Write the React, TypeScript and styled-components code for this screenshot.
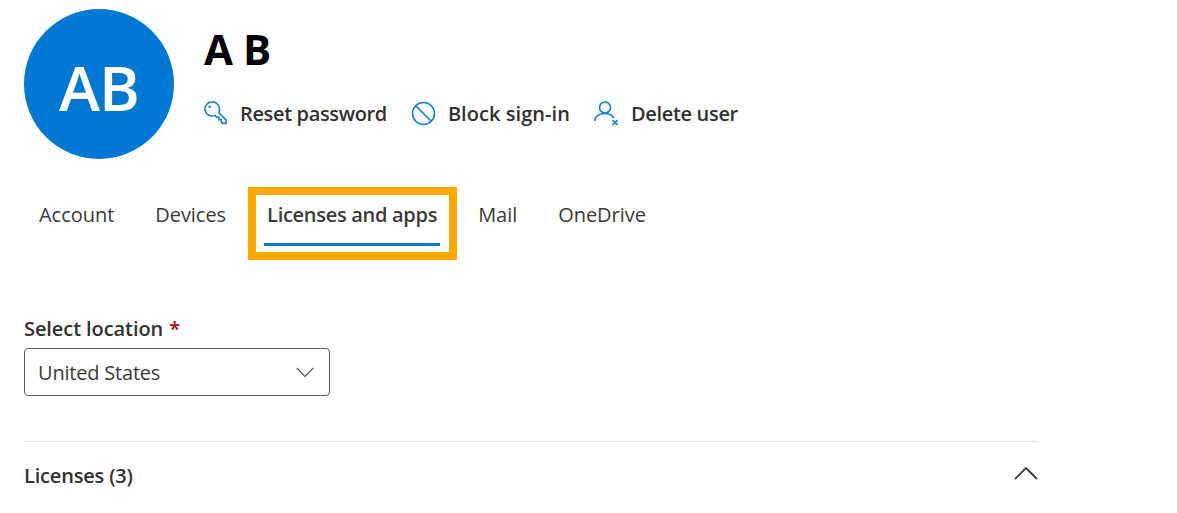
import { createGlobalStyle } from "styled-components";
import styled from "styled-components";

const GlobalStyle = createGlobalStyle`
  html, body {
    margin: 0;
    padding: 0;
    background: #fff;
    overflow: hidden;
  }
  body {
    font-family: "Open Sans", "Noto Sans", "Liberation Sans", sans-serif;
    color: #323130;
  }
`;

const Page = styled.div`
  width: 1014px;
  padding: 9px 0 0 24px;
`;

const Header = styled.div`
  display: flex;
  gap: 30px;
`;

const Avatar = styled.div`
  box-sizing: border-box;
  width: 150px;
  height: 150px;
  padding-top: 5px;
  border-radius: 50%;
  background: #0078d4;
  color: #fff;
  font-size: 62px;
  font-weight: 600;
  letter-spacing: -1px;
  display: flex;
  align-items: center;
  justify-content: center;
`;

const HeaderInfo = styled.div`
  padding-top: 14px;
`;

const Name = styled.div`
  font-size: 42px;
  line-height: 52px;
  font-weight: 700;
  color: #000;
  letter-spacing: -0.5px;
`;

const Actions = styled.div`
  display: flex;
  gap: 24px;
  margin-top: 12px;
`;

const Action = styled.div<{ $tracking: number }>`
  display: flex;
  align-items: center;
  gap: 12px;
  height: 52px;
  font-size: 20px;
  font-weight: 600;
  letter-spacing: ${(p) => p.$tracking}px;
  white-space: nowrap;
`;

const Tabs = styled.div`
  display: flex;
  gap: 35px;
  margin: 28px 0 0 12px;
  height: 73px;
`;

const Tab = styled.div<{ $active?: boolean }>`
  position: relative;
  padding: 0 3px;
  font-size: 20px;
  line-height: 56px;
  height: 73px;
  white-space: nowrap;
  letter-spacing: ${(p) => (p.$active ? "-0.29px" : "-0.04px")};
  font-weight: ${(p) => (p.$active ? 600 : 400)};
  color: #3b3a39;

  ${(p) =>
    p.$active &&
    `
    &::before {
      content: "";
      position: absolute;
      inset: 0 -17px 0 -16px;
      border: 8px solid #ffa900;
    }
    &::after {
      content: "";
      position: absolute;
      left: 0;
      right: 0;
      top: 56px;
      height: 3px;
      background: #0078d4;
    }
  `}
`;

const Field = styled.div`
  margin-top: 55px;
`;

const Label = styled.div`
  font-size: 20px;
  line-height: 28px;
  font-weight: 600;
  letter-spacing: -0.08px;
`;

const Star = styled.span`
  color: #a80000;
  margin-left: 6px;
`;

const Select = styled.div`
  box-sizing: border-box;
  width: 306px;
  height: 48px;
  margin-top: 5px;
  padding: 1px 15px 0 13px;
  border: 1px solid #605e5c;
  border-radius: 4px;
  display: flex;
  align-items: center;
  justify-content: space-between;
  font-size: 20px;
  letter-spacing: -0.2px;
  color: #3b3a39;
`;

const Section = styled.div`
  margin-top: 45px;
  border-top: 1px solid #e5e5e5;
  height: 70px;
  display: flex;
  align-items: flex-start;
  justify-content: space-between;
`;

const SectionTitle = styled.div`
  margin-top: 20px;
  font-size: 20px;
  line-height: 28px;
  font-weight: 600;
  letter-spacing: -0.18px;
`;

const SectionToggle = styled.svg`
  margin-top: 24px;
`;

function KeyIcon() {
  return (
    <svg width="24" height="24" viewBox="0 0 24 24" fill="none" stroke="#0f7fd8" strokeWidth="1.6">
      <path d="M8 .9A7.1 7.1 0 0 0 .9 8c0 3.900 3.200 7 7.100 7 1.100 0 2-.2 2.800-.6l1.900 1.900h2.300v2.300h2.300v2.300l1.500 1.500h3.300v-3.300l-7.300-7.400c.4-.9.600-1.700.600-2.700A7.100 7.100 0 0 0 8 .9z" />
      <circle cx="5.800" cy="5.800" r="1.300" fill="#0f7fd8" stroke="none" />
    </svg>
  );
}

function BlockIcon() {
  return (
    <svg width="25" height="25" viewBox="0 0 25 25" fill="none" stroke="#0f7fd8" strokeWidth="1.6">
      <circle cx="12.500" cy="12.500" r="11" />
      <path d="M4.800 4.800l15.400 15.400" />
    </svg>
  );
}

function DeleteUserIcon() {
  return (
    <svg width="25" height="25" viewBox="0 0 25 25" fill="none" stroke="#0f7fd8" strokeWidth="1.6">
      <circle cx="11" cy="6.500" r="5.500" />
      <path d="M1 20c0-4.800 4-7.500 10-7.500 2.800 0 5 .6 6.700 1.800 1 .8 1.700 1.900 2 3" />
      <path d="M18.500 19l5 5M23.500 19l-5 5" />
    </svg>
  );
}

export default function App() {
  return (
    <Page>
      <GlobalStyle />
      <Header>
        <Avatar>AB</Avatar>
        <HeaderInfo>
          <Name>A B</Name>
          <Actions>
            <Action $tracking={-0.35}>
              <KeyIcon />
              Reset password
            </Action>
            <Action $tracking={0.05}>
              <BlockIcon />
              Block sign-in
            </Action>
            <Action $tracking={-0.32}>
              <DeleteUserIcon />
              Delete user
            </Action>
          </Actions>
        </HeaderInfo>
      </Header>
      <Tabs>
        <Tab>Account</Tab>
        <Tab>Devices</Tab>
        <Tab $active>Licenses and apps</Tab>
        <Tab>Mail</Tab>
        <Tab>OneDrive</Tab>
      </Tabs>
      <Field>
        <Label>
          Select location<Star>*</Star>
        </Label>
        <Select>
          United States
          <svg width="18" height="11" viewBox="0 0 18 11" fill="none" stroke="#605e5c" strokeWidth="1.3">
            <path d="M.8 1L9 9.500 17.200 1" />
          </svg>
        </Select>
      </Field>
      <Section>
        <SectionTitle>Licenses (3)</SectionTitle>
        <SectionToggle width="24" height="14" viewBox="0 0 24 14" fill="none" stroke="#3b3a39" strokeWidth="1.8">
          <path d="M1 13L12 2l11 11" />
        </SectionToggle>
      </Section>
    </Page>
  );
}
